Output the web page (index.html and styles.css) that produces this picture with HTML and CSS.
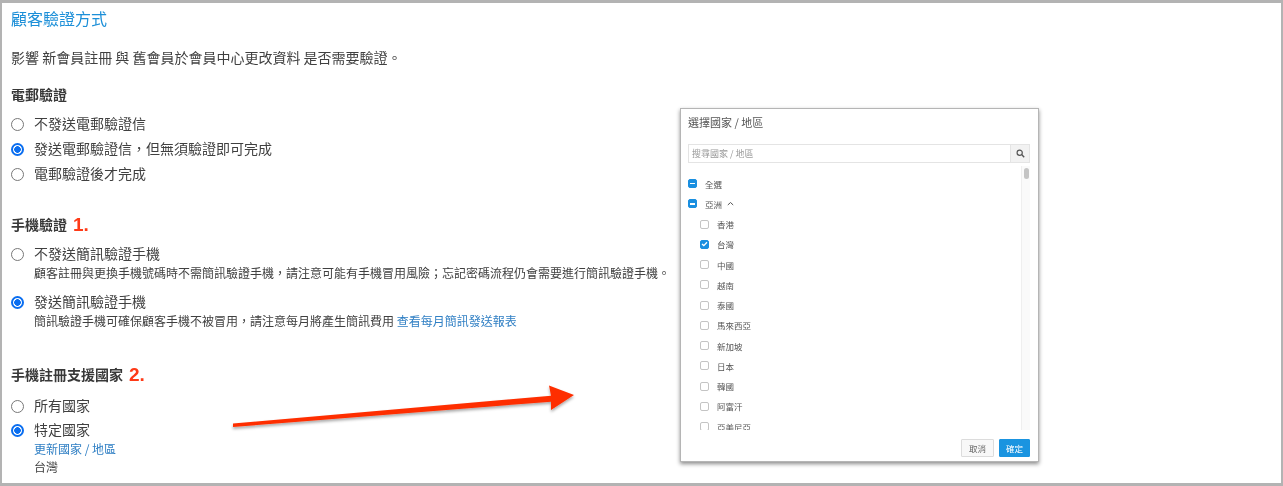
FILE: index.html
```html
<!DOCTYPE html>
<html lang="zh-Hant">
<head>
<meta charset="utf-8">
<title>顧客驗證方式</title>
<link rel="stylesheet" href="styles.css">
</head>
<body>
<main class="panel">
  <div class="content">
    <h1 class="title">顧客驗證方式</h1>
    <p class="intro">影響 新會員註冊 與 舊會員於會員中心更改資料 是否需要驗證。</p>

    <h2 class="heading h-email">電郵驗證</h2>
    <div class="options">
      <label class="option"><input type="radio" name="email"><span>不發送電郵驗證信</span></label>
      <label class="option"><input type="radio" name="email" checked><span>發送電郵驗證信，但無須驗證即可完成</span></label>
      <label class="option"><input type="radio" name="email"><span>電郵驗證後才完成</span></label>
    </div>

    <h2 class="heading h-phone">手機驗證<span class="mark">1.</span></h2>
    <div class="options stacked">
      <div class="choice">
        <label class="option"><input type="radio" name="phone"><span>不發送簡訊驗證手機</span></label>
        <p class="hint">顧客註冊與更換手機號碼時不需簡訊驗證手機，請注意可能有手機冒用風險；忘記密碼流程仍會需要進行簡訊驗證手機。</p>
      </div>
      <div class="choice">
        <label class="option"><input type="radio" name="phone" checked><span>發送簡訊驗證手機</span></label>
        <p class="hint">簡訊驗證手機可確保顧客手機不被冒用，請注意每月將產生簡訊費用 <a href="#">查看每月簡訊發送報表</a></p>
      </div>
    </div>

    <h2 class="heading h-country">手機註冊支援國家<span class="mark">2.</span></h2>
    <div class="options tight">
      <label class="option"><input type="radio" name="country"><span>所有國家</span></label>
      <div class="choice">
        <label class="option"><input type="radio" name="country" checked><span>特定國家</span></label>
        <p class="hint"><a href="#">更新國家 / 地區</a></p>
        <p class="hint">台灣</p>
      </div>
    </div>
  </div>

  <svg class="arrow" width="360" height="60" viewBox="0 0 360 60" aria-hidden="true">
    <defs>
      <filter id="arrow-shadow" x="-5%" y="-30%" width="110%" height="170%">
        <feDropShadow dx="0" dy="2" stdDeviation="1.6" flood-color="#000" flood-opacity=".35"/>
      </filter>
    </defs>
    <polygon filter="url(#arrow-shadow)" fill="#fe2f06" points="2,40.5 320,12.7 318,2.5 343,12 320,27 320,18.7 2,44"/>
  </svg>

  <section class="modal">
    <h3 class="modal-title">選擇國家 / 地區</h3>
    <div class="search">
      <span class="search-text">搜尋國家 / 地區</span>
      <span class="search-btn">
        <svg width="9" height="9" viewBox="0 0 9 9" aria-hidden="true"><circle cx="3.7" cy="3.7" r="2.6" fill="none" stroke="#555" stroke-width="1.2"/><path d="M5.6 5.6 8.2 8.2" stroke="#555" stroke-width="1.4"/></svg>
      </span>
    </div>
    <div class="list-wrap">
      <ul class="list">
        <li class="row"><span class="box on"><i class="dash"></i></span>全選</li>
        <li class="row"><span class="box on"><i class="dash"></i></span>亞洲<svg class="chev" width="7" height="5" viewBox="0 0 7 5" aria-hidden="true"><path d="M.8 4 3.5 1.5 6.2 4" fill="none" stroke="#555" stroke-width="1"/></svg></li>
        <li class="row sub"><span class="box"></span>香港</li>
        <li class="row sub"><span class="box on"><svg width="7" height="6" viewBox="0 0 7 6" aria-hidden="true"><path d="M1 3 2.8 4.6 6 1.2" fill="none" stroke="#fff" stroke-width="1.3"/></svg></span>台灣</li>
        <li class="row sub"><span class="box"></span>中國</li>
        <li class="row sub"><span class="box"></span>越南</li>
        <li class="row sub"><span class="box"></span>泰國</li>
        <li class="row sub"><span class="box"></span>馬來西亞</li>
        <li class="row sub"><span class="box"></span>新加坡</li>
        <li class="row sub"><span class="box"></span>日本</li>
        <li class="row sub"><span class="box"></span>韓國</li>
        <li class="row sub"><span class="box"></span>阿富汗</li>
        <li class="row sub"><span class="box"></span>亞美尼亞</li>
      </ul>
      <div class="scrollbar"><span class="thumb"></span></div>
    </div>
    <div class="actions">
      <button class="btn" type="button">取消</button>
      <button class="btn primary" type="button">確定</button>
    </div>
  </section>
</main>
</body>
</html>
```

FILE: styles.css
```css
* { box-sizing: border-box; }
html, body { margin: 0; height: 100%; }
body {
  background: #b3b3b3;
  padding: 3px 2px;
  font-family: "Noto Sans CJK TC", "Noto Sans", sans-serif;
  color: #404040;
  overflow: hidden;
}
.panel {
  position: relative;
  height: 480px;
  background: #fff;
  overflow: hidden;
}
.content {
  padding: 4px 0 0 9px;
  filter: blur(.3px);
}
.title {
  margin: 0;
  font-size: 16px;
  line-height: 22px;
  font-weight: 400;
  color: #1c8fd8;
}
.intro {
  margin: 18px 0 0;
  font-size: 14px;
  line-height: 20px;
}
.heading {
  height: 20px;
  margin: 0;
  font-size: 14px;
  line-height: 20px;
  font-weight: 700;
  color: #383838;
}
.h-email { margin-top: 17px; }
.h-phone { margin-top: 31px; }
.h-country { margin-top: 34px; }
.mark {
  margin-left: 6px;
  font-family: "Liberation Sans", sans-serif;
  font-size: 19px;
  font-weight: 700;
  color: #fe3a17;
  vertical-align: -1px;
}
.options {
  display: flex;
  flex-direction: column;
  gap: 5px;
  margin-top: 9px;
}
.options.stacked { gap: 9px; }
.options.tight { gap: 4px; margin-top: 11px; }
.option {
  display: flex;
  align-items: center;
  gap: 10px;
  height: 20px;
  font-size: 14px;
  line-height: 20px;
}
.option input {
  appearance: none;
  flex: none;
  width: 13px;
  height: 13px;
  margin: 2px 0 0;
  background: #fff;
  border: 1px solid #777;
  border-radius: 50%;
}
.option input:checked {
  border: 2px solid #0a6ef0;
  background: radial-gradient(circle, #0a6ef0 0 3px, #fff 3.6px);
}
.hint {
  margin: 0 0 0 23px;
  font-size: 12px;
  line-height: 18px;
}
.option + .hint { margin-top: 1px; }
.hint a { color: #2f7fc4; text-decoration: none; }

.arrow {
  position: absolute;
  left: 229px;
  top: 380px;
}

.modal {
  position: absolute;
  left: 678px;
  top: 105px;
  width: 359px;
  height: 354px;
  padding: 0 8px 0 7px;
  background: #fff;
  border: 1px solid #b5b5b5;
  box-shadow: 0 2px 4px rgba(0, 0, 0, .45);
  filter: blur(.5px);
  color: #555;
}
.modal-title {
  margin: 0;
  padding-top: 4px;
  font-size: 11px;
  line-height: 18px;
  font-weight: 400;
}
.search {
  display: flex;
  align-items: center;
  height: 19px;
  margin-top: 13px;
  border: 1px solid #e4e4e4;
}
.search-text {
  flex: 1;
  padding-left: 3px;
  font-size: 9px;
  line-height: 17px;
  color: #999;
}
.search-btn {
  display: flex;
  align-items: center;
  justify-content: center;
  width: 19px;
  height: 17px;
  background: #f2f2f2;
  border-left: 1px solid #e4e4e4;
}
.list-wrap {
  display: flex;
  height: 264px;
  margin-top: 3px;
  overflow: hidden;
}
.list {
  flex: 1;
  margin: 0;
  padding: 7.5px 0 0;
  list-style: none;
}
.row {
  display: flex;
  align-items: center;
  height: 20.25px;
  font-size: 8.5px;
}
.row.sub { padding-left: 12px; }
.box {
  display: flex;
  align-items: center;
  justify-content: center;
  width: 9px;
  height: 9px;
  margin-right: 8px;
  background: #fff;
  border: 1px solid #c4c4c4;
  border-radius: 2px;
}
.box.on {
  background: #1a8fe0;
  border-color: #1a8fe0;
}
.dash {
  display: block;
  width: 5px;
  height: 1.5px;
  background: #fff;
}
.chev { margin-left: 5px; }
.scrollbar {
  width: 9px;
  background: #fafafa;
  border-left: 1px solid #efefef;
  padding: 2px 0 0 2px;
}
.thumb {
  display: block;
  width: 5px;
  height: 11px;
  border-radius: 3px;
  background: #c4c4c4;
}
.actions {
  display: flex;
  justify-content: flex-end;
  gap: 5px;
  margin-top: 9px;
}
.btn {
  width: 33px;
  height: 18px;
  padding: 0;
  font-family: inherit;
  font-size: 8.5px;
  line-height: 16px;
  color: #666;
  background: #f8f8f8;
  border: 1px solid #dcdcdc;
  border-radius: 1px;
}
.btn.primary {
  width: 31px;
  color: #fff;
  background: #1a94e0;
  border-color: #1a94e0;
}
```
